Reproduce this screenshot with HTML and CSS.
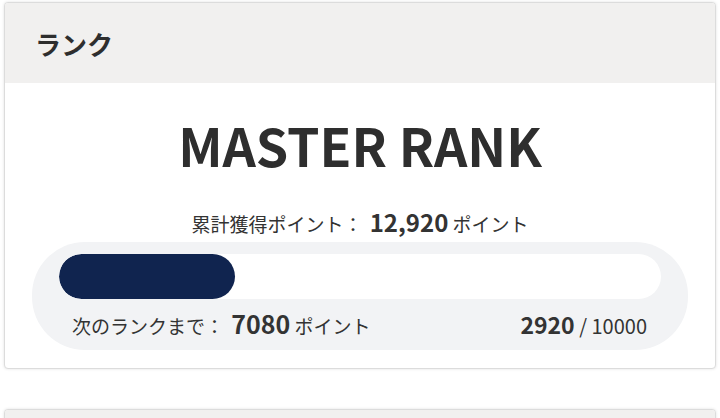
FILE: index.html
```html
<!DOCTYPE html>
<html lang="ja">
<head>
<meta charset="utf-8">
<link rel="stylesheet" href="styles.css">
</head>
<body>
<section class="card">
  <div class="card-head">ランク</div>
  <div class="card-body">
    <div class="rank-name">MASTER RANK</div>
    <div class="total">累計獲得ポイント： <strong>12,920</strong> ポイント</div>
    <div class="progress-box">
      <div class="track"><div class="fill" style="width:29.2%"></div></div>
      <div class="progress-row">
        <div class="next">次のランクまで： <strong>7080</strong> ポイント</div>
        <div class="ratio"><strong>2920</strong> / 10000</div>
      </div>
    </div>
  </div>
</section>
<section class="card card-next">
  <div class="card-head"></div>
</section>
</body>
</html>
```
FILE: styles.css
```css
html, body {
  margin: 0;
  padding: 0;
  background: #ffffff;
}
body {
  padding-top: 2px;
  font-family: "Noto Sans CJK JP", "Noto Sans", sans-serif;
  color: #333333;
}
.card {
  margin: 0 4px;
  border: 1px solid #dcdcdc;
  border-radius: 4px;
  background: #ffffff;
  box-shadow: 0 0 3px rgba(0, 0, 0, 0.12);
  overflow: hidden;
}
.card-next {
  margin-top: 40px;
}
.card-head {
  height: 80px;
  background: #f1f0ef;
  display: flex;
  align-items: center;
  padding-left: 30px;
  font-size: 26px;
  font-weight: 700;
  color: #2e2e2e;
}
.card-body {
  padding: 35px 27px 18px;
}
.rank-name {
  text-align: center;
  font-size: 52px;
  font-weight: 700;
  line-height: 54px;
  color: #2e2e2e;
}
.total {
  margin-top: 37px;
  text-align: center;
  font-size: 19px;
  line-height: 26px;
}
.total strong {
  font-size: 24px;
  font-weight: 700;
  margin-left: 3px;
}
.next strong {
  font-size: 25px;
  font-weight: 700;
  margin-left: 3px;
}
.ratio {
  font-size: 20px;
}
.ratio strong {
  font-size: 23px;
  font-weight: 700;
}
.progress-box {
  margin-top: 5px;
  background: #f2f3f5;
  border-radius: 53px;
  padding: 12px 27px 9px;
}
.track {
  height: 45px;
  background: #ffffff;
  border-radius: 23px;
  overflow: hidden;
}
.fill {
  height: 100%;
  background: #10244f;
  border-radius: 23px;
}
.progress-row {
  margin-top: 9px;
  display: flex;
  justify-content: space-between;
  align-items: baseline;
  padding: 0 14px 0 13px;
  font-size: 19px;
  line-height: 30px;
}
```
